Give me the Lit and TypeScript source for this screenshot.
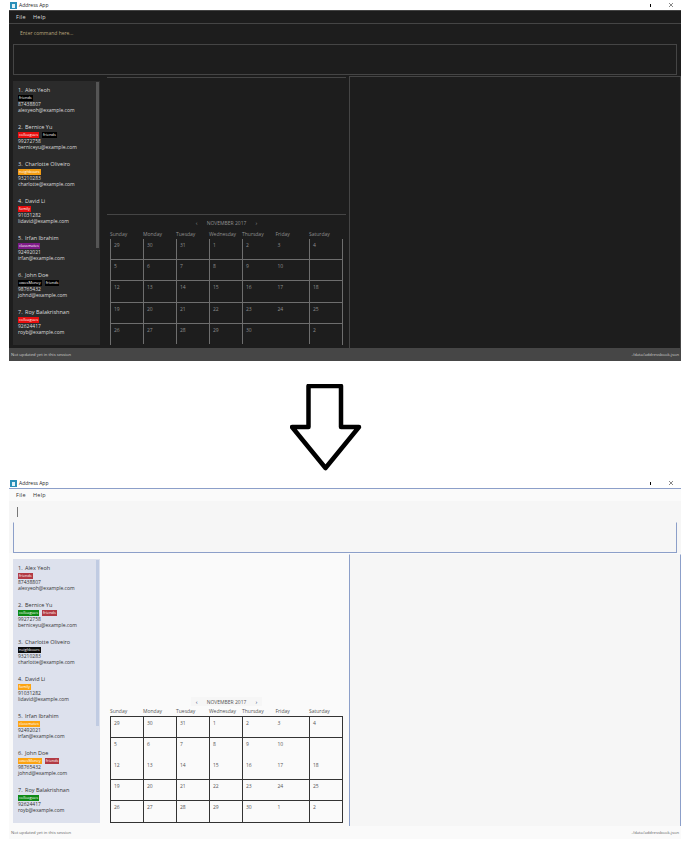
import { LitElement, html, css } from 'lit';
import { customElement, property } from 'lit/decorators.js';

const PEOPLE = [
  { name: 'Alex Yeoh', phone: '87438807', email: 'alexyeoh@example.com', tags: [['friends', 'black', 'red']] },
  { name: 'Bernice Yu', phone: '99272758', email: 'berniceyu@example.com', tags: [['colleagues', 'red', 'green'], ['friends', 'black', 'red']] },
  { name: 'Charlotte Oliveiro', phone: '93210283', email: 'charlotte@example.com', tags: [['neighbours', 'orange', 'black']] },
  { name: 'David Li', phone: '91031282', email: 'lidavid@example.com', tags: [['family', 'red', 'orange']] },
  { name: 'Irfan Ibrahim', phone: '92492021', email: 'irfan@example.com', tags: [['classmates', 'purple', 'orange']] },
  { name: 'John Doe', phone: '98765432', email: 'johnd@example.com', tags: [['owesMoney', 'black', 'orange'], ['friends', 'black', 'red']] },
  { name: 'Roy Balakrishnan', phone: '92624417', email: 'royb@example.com', tags: [['colleagues', 'red', 'green']] },
];

const DAYS = ['Sunday', 'Monday', 'Tuesday', 'Wednesday', 'Thursday', 'Friday', 'Saturday'];
const WEEKS = [
  ['29', '30', '31', '1', '2', '3', '4'],
  ['5', '6', '7', '8', '9', '10', ''],
  ['12', '13', '14', '15', '16', '17', '18'],
  ['19', '20', '21', '22', '23', '24', '25'],
  ['26', '27', '28', '29', '30', '1', '2'],
];

@customElement('addr-window')
export class AddrWindow extends LitElement {
  static styles = css`
    :host {
      display: block;
      font-family: 'Open Sans', 'Liberation Sans', sans-serif;
      --bg: #f6f6f6;
      --line: #8c9fc9;
      --menu: #fafafa;
      --text: #333;
      --muted: #555;
      --panel: #dde1ed;
      --thumb: #c0cbe2;
      --center: #fafafa;
      --grid: #333;
      --status: #fafafa;
      --status-text: #666;
    }
    :host([dark]) {
      --bg: #1d1d1d;
      --line: #454545;
      --menu: #1d1d1d;
      --text: #ddd;
      --muted: #8f8f8f;
      --panel: #2b2b2b;
      --thumb: #555;
      --center: #1d1d1d;
      --grid: #6e6e6e;
      --status: #464646;
      --status-text: #ccc;
    }
    .title {
      height: 10px;
      display: flex;
      align-items: center;
      padding-left: 10px;
      gap: 2px;
      background: #fff;
      color: #222;
      font-size: 5px;
    }
    .app-icon {
      width: 7px;
      height: 7px;
      flex: none;
    }
    .controls {
      margin-left: auto;
      margin-right: 18px;
      display: flex;
      gap: 18px;
      align-items: center;
    }
    .min {
      width: 1px;
      height: 3px;
      background: #000;
    }
    .close {
      width: 4px;
      height: 4px;
    }
    .win {
      margin-left: 9px;
      width: 672px;
      height: 351px;
      box-sizing: border-box;
      background: var(--bg);
      display: flex;
      flex-direction: column;
      overflow: hidden;
    }
    .menu {
      flex: none;
      height: 13px;
      box-sizing: border-box;
      border-top: 1px solid var(--line);
      background: var(--menu);
      display: flex;
      align-items: center;
      gap: 7px;
      padding-left: 7px;
      font-size: 5.5px;
      letter-spacing: 0.3px;
      color: var(--text);
    }
    .command {
      flex: none;
      height: 21px;
      box-sizing: border-box;
      border-top: 1px solid var(--line);
      display: flex;
      align-items: center;
      padding: 0 0 2px 11px;
      font-size: 5px;
      color: #b9a57c;
    }
    :host(:not([dark])) .command {
      border-top-color: transparent;
      padding: 0 0 0 8px;
    }
    .caret {
      width: 1px;
      height: 10px;
      background: #777;
    }
    .result {
      flex: none;
      height: 31px;
      box-sizing: border-box;
      margin: 0 4px;
      border: 1px solid var(--line);
    }
    :host(:not([dark])) .result {
      border-top-color: transparent;
    }
    .main {
      flex: 1;
      min-height: 0;
      display: flex;
      padding: 2px 0 0 4px;
      background: var(--center);
    }
    .list {
      flex: none;
      width: 87px;
      margin-top: 4px;
      height: 264px;
      box-sizing: border-box;
      background: var(--panel);
      position: relative;
      padding: 5px 0 0 5px;
      overflow: hidden;
    }
    .thumb {
      position: absolute;
      top: 1px;
      right: 1px;
      width: 3px;
      height: 166px;
      background: var(--thumb);
    }
    .card {
      height: 37px;
      color: var(--text);
      line-height: 6px;
      font-size: 5px;
    }
    .card .name {
      font-size: 5.5px;
      line-height: 8px;
      height: 8px;
      white-space: nowrap;
    }
    .num {
      display: inline-block;
      width: 7px;
    }
    .tags {
      display: flex;
      gap: 3px;
      height: 6px;
      margin: 1px 0 0;
    }
    .tag {
      height: 6px;
      line-height: 6px;
      padding: 0 1px;
      color: #fff;
      font-size: 3.9px;
    }
    .tag.black { background: #000; }
    .tag.red { background: #e80e0e; }
    .tag.orange { background: #f39c12; }
    .tag.purple { background: #7d1a86; }
    .tag.green { background: #0e8a16; }
    :host(:not([dark])) .tag.red { background: #b23a44; }
    :host(:not([dark])) .tag.orange { background: #fca311; }
    :host(:not([dark])) .tag.black { background: #0a0a0a; }
    .center {
      flex: none;
      width: 239px;
      margin: 0 3px 0 7px;
      display: flex;
      flex-direction: column;
      height: 270px;
      border-top: 1px solid transparent;
    }
    :host([dark]) .center {
      border-top-color: var(--line);
    }
    .spacer {
      flex: 1;
    }
    .cal {
      flex: none;
      height: 134px;
      box-sizing: border-box;
      padding: 0 3px;
      display: flex;
      flex-direction: column;
    }
    :host([dark]) .cal {
      border-top: 1px solid var(--line);
    }
    .month {
      height: 15px;
      box-sizing: border-box;
      display: flex;
      align-items: center;
      justify-content: center;
      font-size: 5px;
      color: var(--muted);
    }
    :host(:not([dark])) .month {
      padding-top: 4px;
    }
    .nav {
      display: flex;
      align-items: center;
      gap: 9px;
      height: 9px;
      padding: 0 5px;
    }
    :host(:not([dark])) .nav {
      background: #f6f6f6;
    }
    .arrow {
      font-size: 6px;
      color: var(--muted);
    }
    :host(:not([dark])) .arrow {
      color: #27406f;
    }
    .head {
      display: grid;
      grid-template-columns: 33px 33px 33px 33px 67px 33px 34px;
      height: 9px;
      line-height: 9px;
      font-size: 5px;
      color: var(--muted);
    }
    .pair-head {
      display: grid;
      grid-template-columns: 33.5px 33.5px;
    }
    .grid {
      box-sizing: border-box;
      width: 233px;
      height: 107px;
      border: 1px solid var(--grid);
      display: flex;
      flex-direction: column;
    }
    :host([dark]) .grid {
      height: 106px;
      border-top: none;
      border-bottom: none;
    }
    .week {
      flex: none;
      height: 21px;
      box-sizing: border-box;
      border-top: 1px solid var(--grid);
      display: grid;
      grid-template-columns: 33px 33px 33px 33px 67px 33px 33px;
    }
    .week.first {
      height: 20px;
      border-top: none;
    }
    .week.open {
      border-top: none;
    }
    .week.open .cell {
      padding-top: 4px;
    }
    :host([dark]) .week:nth-child(3) {
      height: 22px;
    }
    :host(:not([dark])) .week:last-child {
      height: 22px;
    }
    .cell {
      box-sizing: border-box;
      border-right: 1px solid var(--grid);
      padding: 3px 0 0 3px;
      font-size: 5px;
      line-height: 6px;
      color: var(--muted);
      display: flex;
    }
    .cell:last-child {
      border-right: none;
    }
    .cell.pair span {
      width: 33px;
    }
    .detail {
      flex: 1;
      min-width: 0;
      box-sizing: border-box;
      margin-top: -1px;
      background: var(--bg);
      border: 1px solid var(--line);
      border-bottom: none;
    }
    :host(:not([dark])) .detail {
      border-top-color: transparent;
    }
    .status {
      flex: none;
      height: 13px;
      background: var(--status);
      color: var(--status-text);
      display: flex;
      justify-content: space-between;
      align-items: center;
      padding: 0 2px;
      font-size: 4.2px;
    }
  `;

  @property({ type: Boolean, reflect: true }) dark = false;

  renderCard(p: (typeof PEOPLE)[number], i: number) {
    return html`<div class="card">
      <div class="name"><span class="num">${i + 1}.</span>${p.name}</div>
      <div class="tags">
        ${p.tags.map(t => html`<span class="tag ${this.dark ? t[1] : t[2]}">${t[0]}</span>`)}
      </div>
      <div>${p.phone}</div>
      <div>${p.email}</div>
    </div>`;
  }

  renderWeek(week: string[], i: number) {
    // the light window has no rule between the second and third weeks
    const open = !this.dark && i === 2;
    return html`<div class="week ${i === 0 ? 'first' : ''} ${open ? 'open' : ''}">
      ${week.slice(0, 4).map(d => html`<div class="cell">${d}</div>`)}
      <div class="cell pair"><span>${week[4]}</span><span>${week[5]}</span></div>
      <div class="cell">${week[6]}</div>
    </div>`;
  }

  render() {
    const weeks = this.dark ? WEEKS.map((w, i) => (i === 4 ? [...w.slice(0, 5), '', w[6]] : w)) : WEEKS;
    return html`
      <div class="title">
        <svg class="app-icon" viewBox="0 0 7 7">
          <rect width="7" height="7" fill="#2a8fb8"></rect>
          <rect x="2" y="2" width="3" height="4" fill="#dff1f7"></rect>
        </svg>
        <span>Address App</span>
        <div class="controls">
          <div class="min"></div>
          <svg class="close" viewBox="0 0 4 4"><path d="M0 0L4 4M4 0L0 4" stroke="#888" stroke-width="1"></path></svg>
        </div>
      </div>
      <div class="win">
        <div class="menu"><span>File</span><span>Help</span></div>
        <div class="command">
          ${this.dark ? html`<span>Enter command here...</span>` : html`<div class="caret"></div>`}
        </div>
        <div class="result"></div>
        <div class="main">
          <div class="list">
            ${PEOPLE.map((p, i) => this.renderCard(p, i))}
            <div class="thumb"></div>
          </div>
          <div class="center">
            <div class="spacer"></div>
            <div class="cal">
              <div class="month">
                <div class="nav">
                  <span class="arrow">‹</span><span>NOVEMBER 2017</span><span class="arrow">›</span>
                </div>
              </div>
              <div class="head">
                ${DAYS.slice(0, 4).map(d => html`<span>${d}</span>`)}
                <div class="pair-head"><span>${DAYS[4]}</span><span>${DAYS[5]}</span></div>
                <span>${DAYS[6]}</span>
              </div>
              <div class="grid">${weeks.map((w, i) => this.renderWeek(w, i))}</div>
            </div>
          </div>
          <div class="detail"></div>
        </div>
        <div class="status">
          <span>Not updated yet in this session</span>
          <span>./data/addressbook.json</span>
        </div>
      </div>
    `;
  }
}

@customElement('app-root')
export class AppRoot extends LitElement {
  static styles = css`
    :host {
      display: block;
      width: 691px;
      height: 848px;
      background: #fff;
      overflow: hidden;
    }
    .arrow {
      display: block;
      width: 72px;
      height: 88px;
      margin: 23px 0 6px 290px;
    }
  `;

  render() {
    return html`
      <addr-window dark></addr-window>
      <svg class="arrow" viewBox="0 0 72 88">
        <path d="M18.5 2H51V43H69L35.5 84L2 43H18.5Z" fill="#fff" stroke="#000" stroke-width="4.5" stroke-linejoin="round"></path>
      </svg>
      <addr-window></addr-window>
    `;
  }
}
